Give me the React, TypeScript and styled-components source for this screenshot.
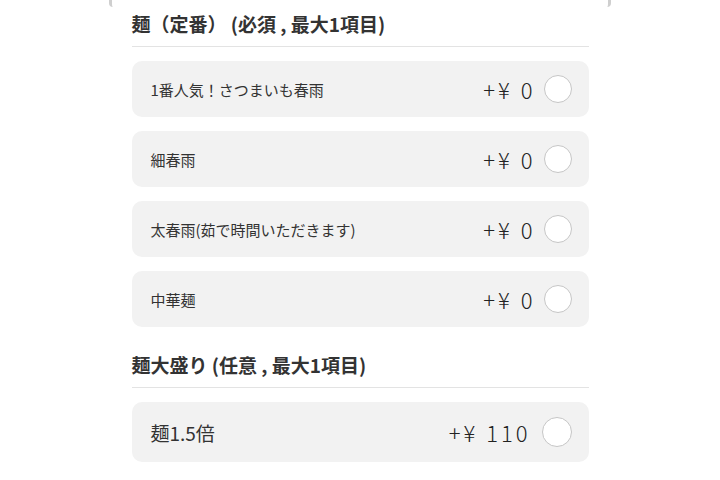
import styled, { createGlobalStyle } from "styled-components"

const GlobalStyle = createGlobalStyle`
    body {
        margin: 0;
        background: #fff;
        font-family: "Noto Sans CJK JP", "Noto Sans", sans-serif;
        color: #333;
    }
`

type Option = { name: string, price: number }

const sections: { title: string, big?: boolean, options: Option[] }[] = [
    {
        title: '麺（定番） (必須 , 最大1項目)',
        options: [
            { name: '1番人気！さつまいも春雨', price: 0 },
            { name: '細春雨', price: 0 },
            { name: '太春雨(茹で時間いただきます)', price: 0 },
            { name: '中華麺', price: 0 },
        ],
    },
    {
        title: '麺大盛り (任意 , 最大1項目)',
        big: true,
        options: [
            { name: '麺1.5倍', price: 110 },
        ],
    },
]

export default function App() {
    return (
        <>
            <GlobalStyle />
            <Edge />
            <Container>
                {sections.map(section => (
                    <Section key={section.title}>
                        <Title>{section.title}</Title>
                        <Divider />
                        <List>
                            {section.options.map(option => (
                                <Card key={option.name} $big={section.big}>
                                    <Name $big={section.big}>{option.name}</Name>
                                    <Right $big={section.big}>
                                        <Price>+¥ {option.price}</Price>
                                        <Radio $big={section.big} />
                                    </Right>
                                </Card>
                            ))}
                        </List>
                    </Section>
                ))}
            </Container>
        </>
    )
}

const Edge = styled.div`
    height: 7px;
    margin: 0 109px -7px;
    border-left: 3px solid #cfcfcf;
    border-right: 3px solid #cfcfcf;
    border-bottom-left-radius: 4px;
    border-bottom-right-radius: 4px;
`

const Container = styled.div`
    width: 457px;
    margin: 0 auto;
    display: flex;
    flex-direction: column;
    gap: 14px;
    padding-bottom: 20px;
`

const Section = styled.div`
    display: flex;
    flex-direction: column;
`

const Title = styled.h2`
    margin: 0;
    padding: 12px 0 10px;
    font-size: 19px;
    line-height: 24px;
    font-weight: 700;
    color: #333;
`

const Divider = styled.div`
    height: 1px;
    background: #e3e3e3;
    margin-bottom: 14px;
`

const List = styled.div`
    display: flex;
    flex-direction: column;
    gap: 14px;
`

const Card = styled.div<{ $big?: boolean }>`
    height: ${p => p.$big ? 60 : 56}px;
    box-sizing: border-box;
    background: #f2f2f2;
    border-radius: 10px;
    padding: 0 17px 0 19px;
    display: flex;
    align-items: center;
    justify-content: space-between;
`

const Name = styled.span<{ $big?: boolean }>`
    font-size: ${p => p.$big ? 19 : 15}px;
    color: #333;
`

const Right = styled.div<{ $big?: boolean }>`
    display: flex;
    align-items: center;
    gap: ${p => p.$big ? 11 : 8}px;
`

const Price = styled.span`
    font-size: 22px;
    font-weight: 300;
    color: #222;
    letter-spacing: 3px;
`

const Radio = styled.span<{ $big?: boolean }>`
    width: ${p => p.$big ? 30 : 28}px;
    height: ${p => p.$big ? 30 : 28}px;
    box-sizing: border-box;
    border-radius: 50%;
    background: #fff;
    border: 1px solid #c6c6c6;
`
